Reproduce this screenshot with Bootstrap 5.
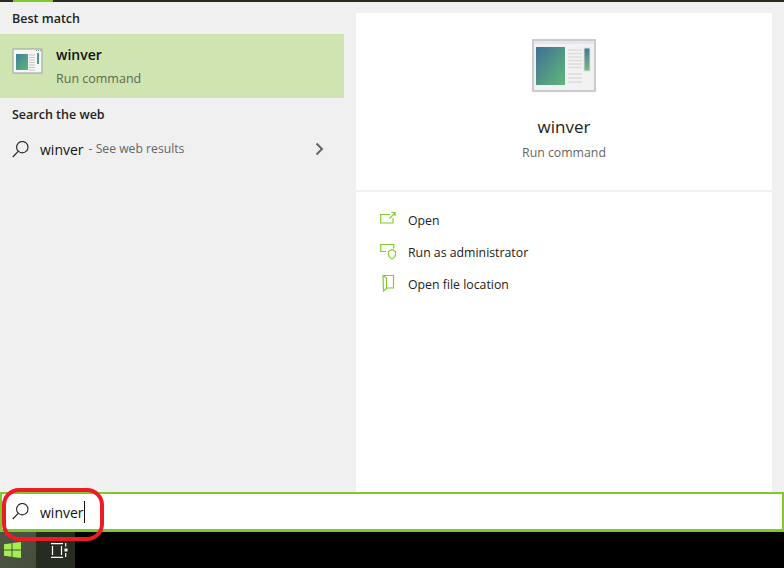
<!DOCTYPE html>
<html lang="en"><head><meta charset="utf-8"><title>winver</title>
<link href="https://cdn.jsdelivr.net/npm/bootstrap@5.3.0/dist/css/bootstrap.min.css" rel="stylesheet">
<style>
html,body{height:100%;overflow:hidden}
body{width:784px;height:568px;font-family:"Open Sans","Noto Sans",sans-serif;font-size:13px;color:#111;background:#f0f0f0;position:relative}
.topstrip{height:2px;background:#2b2b22;padding-left:13px}
.topstrip i{display:block;width:40px;height:2px;background:#7fc92c}
.mainarea{height:490px}
.leftpane{width:344px;background:#f0f0f0}
.grouphead{font-size:12.5px;font-weight:600;color:#222;padding-left:12px;line-height:17px}
.hit{height:64px;background:#cfe4b0;padding-left:12px;margin-top:7px}
.hit svg{margin-right:12px;margin-top:-6px}
.hit b{font-size:14px;font-weight:600;line-height:20px;display:block;color:#111;padding-top:2px}
.hit span{font-size:12.5px;color:#5c6a50;line-height:20px;display:block;margin-top:4px}
.webrow{height:34px;padding:0 20px 0 12px;margin-top:9px}
.webrow .q{font-size:14px;margin-left:11px;color:#111}
.webrow .m{font-size:12.2px;color:#666;margin-left:5px;padding-top:1px}
.rightpane{width:440px;padding:11px 12px 0}
.detail{height:479px;background:#fff}
.dhead{height:179px;border-bottom:2px solid #f0f0f0;padding-top:26px}
.dhead svg{display:block;margin:0 auto}
.dhead h1{font-size:17px;font-weight:400;margin:23px 0 0;line-height:24px;color:#222}
.dhead p{font-size:12.3px;color:#666;margin:5px 0 0;line-height:18px}
.acts{padding-top:13px}
.act{height:32px;padding-left:24px}
.act svg{width:18px;height:18px;margin-right:10px;margin-top:-4px}
.act span{font-size:12.3px;color:#222}
.searchbar{height:40px;background:#fff;border:2px solid #7fc92c;border-bottom-width:3px;padding-left:10px}
.searchbar .q{font-size:14px;margin-left:11px;color:#111;border-right:1px solid #111;line-height:21px;padding-top:1px;margin-top:1px}
.taskbar{height:36px;background:#000}
.startbtn{width:36px;background:linear-gradient(135deg,#4d5645,#454c3c)}
.startbtn svg{margin-left:-12px}
.viewbtn{width:39px;background:#272c20}
.viewbtn svg{margin-left:7px}
.ring{position:absolute;left:2px;top:488px;width:102px;height:53px;border:4px solid #ed1c24;border-radius:17px}
</style></head>
<body>
<div class="topstrip"><i></i></div>
<div class="mainarea d-flex">
  <div class="leftpane">
    <div class="grouphead pt-2">Best match</div>
    <div class="hit d-flex align-items-center">
      <svg width="32" height="32" viewBox="0 0 32 32"><defs><linearGradient id="g1" x1="0" y1="0" x2="1" y2="1"><stop offset="0" stop-color="#3f7f98"/><stop offset="1" stop-color="#62b678"/></linearGradient></defs><rect x="1" y="2" width="29" height="24" fill="#f6f6f6" stroke="#9a9ea6"/><rect x="4" y="7" width="12" height="16" fill="url(#g1)"/><path d="M17 8h6M17 10.500h6M17 13h6M17 15.500h6M17 18h6M17 20.500h6M17 23h6" stroke="#c4c4c4"/><rect x="25" y="6" width="2" height="11" fill="#4a9c8a"/><path d="M24 3.500h1M26 3.500h1M28 3.500h1" stroke="#888"/></svg>
      <div><b>winver</b><span>Run command</span></div>
    </div>
    <div class="grouphead" style="margin-top:8px">Search the web</div>
    <div class="webrow d-flex align-items-center">
      <svg width="17" height="17" viewBox="0 0 17 17" fill="none" stroke="#222" stroke-width="1.100"><circle cx="10.300" cy="6.200" r="5.700"/><path d="M6.200 10.300L.8 16"/></svg>
      <span class="q">winver</span><span class="m">- See web results</span>
      <svg class="ms-auto" width="9" height="14" viewBox="0 0 9 14" fill="none" stroke="#666" stroke-width="2"><path d="M1.500 1.500L7 7l-5.500 5.500"/></svg>
    </div>
  </div>
  <div class="rightpane">
    <div class="detail">
      <div class="dhead text-center">
        <svg width="64" height="53" viewBox="0 0 64 53"><defs><linearGradient id="g2" x1="0" y1="0" x2="1" y2="1"><stop offset="0" stop-color="#3f7096"/><stop offset="1" stop-color="#60b878"/></linearGradient><linearGradient id="g3" x1="0" y1="0" x2="0" y2="1"><stop offset="0" stop-color="#3d7a9b"/><stop offset="1" stop-color="#7cbc78"/></linearGradient></defs><rect x="1" y="1" width="62" height="51" fill="#f2f2f2" stroke="#c8ccd2" stroke-width="2"/><rect x="2" y="2" width="60" height="3" fill="#e4e6e8"/><rect x="4" y="8" width="29" height="38" fill="url(#g2)"/><path d="M36 11h14M36 14.500h14M36 18h14M36 21.500h14M36 25h14M36 28.500h14M36 35h14M36 39h14M36 43h14" stroke="#dcdcdc" stroke-width="1.500"/><rect x="52" y="9" width="6" height="23" fill="url(#g3)" stroke="#ddd"/></svg>
        <h1>winver</h1>
        <p>Run command</p>
      </div>
      <div class="acts">
        <div class="act d-flex align-items-center"><svg viewBox="0 0 18 18" fill="none" stroke="#84cc30" stroke-width="1.200"><path d="M10 4.500H.7v8.500h12.300V8M9.500 8.500L15 3M11.500 2.500H15V6"/></svg><span>Open</span></div>
        <div class="act d-flex align-items-center"><svg viewBox="0 0 18 18" fill="none" stroke="#84cc30" stroke-width="1.200"><path d="M6 9.500H.7V2.500h13v4M8.500 9.500l3.500-2 3.500 2v3c0 2-1.800 3.500-3.500 4.500-1.700-1-3.500-2.500-3.500-4.500z"/></svg><span>Run as administrator</span></div>
        <div class="act d-flex align-items-center"><svg viewBox="0 0 18 18" fill="none" stroke="#84cc30" stroke-width="1.200"><path d="M3 1.500h10.500V14H7L3.500 17zM3 1.500l3.500 2.500v11M13.500 8v6"/></svg><span>Open file location</span></div>
      </div>
    </div>
  </div>
</div>
<div class="searchbar d-flex align-items-center">
  <svg width="17" height="17" viewBox="0 0 17 17" fill="none" stroke="#222" stroke-width="1.100"><circle cx="10.300" cy="6.200" r="5.700"/><path d="M6.200 10.300L.8 16"/></svg>
  <span class="q">winver</span>
</div>
<div class="taskbar d-flex">
  <div class="startbtn d-flex align-items-center justify-content-center"><svg width="17" height="16" viewBox="0 0 17 16" fill="#a4ee50"><path d="M0 2.300L7.500 1.200V7.500H0zM8.500 1L17 0V7.500H8.500zM0 8.500H7.500V14.800L0 13.700zM8.500 8.500H17V16L8.500 15z"/></svg></div>
  <div class="viewbtn d-flex align-items-center justify-content-center"><svg width="17" height="15" viewBox="0 0 17 15" fill="none" stroke="#fff" stroke-width="1.200"><path d="M0 .7h12M0 14.300h12M1.500 3v9M10.500 3v9"/><path d="M14.700 0v3.500M14.700 10v4"/><rect x="13.500" y="5.500" width="3" height="3" fill="#fff" stroke="none"/></svg></div>
</div>
<div class="ring"></div>
</body></html>
